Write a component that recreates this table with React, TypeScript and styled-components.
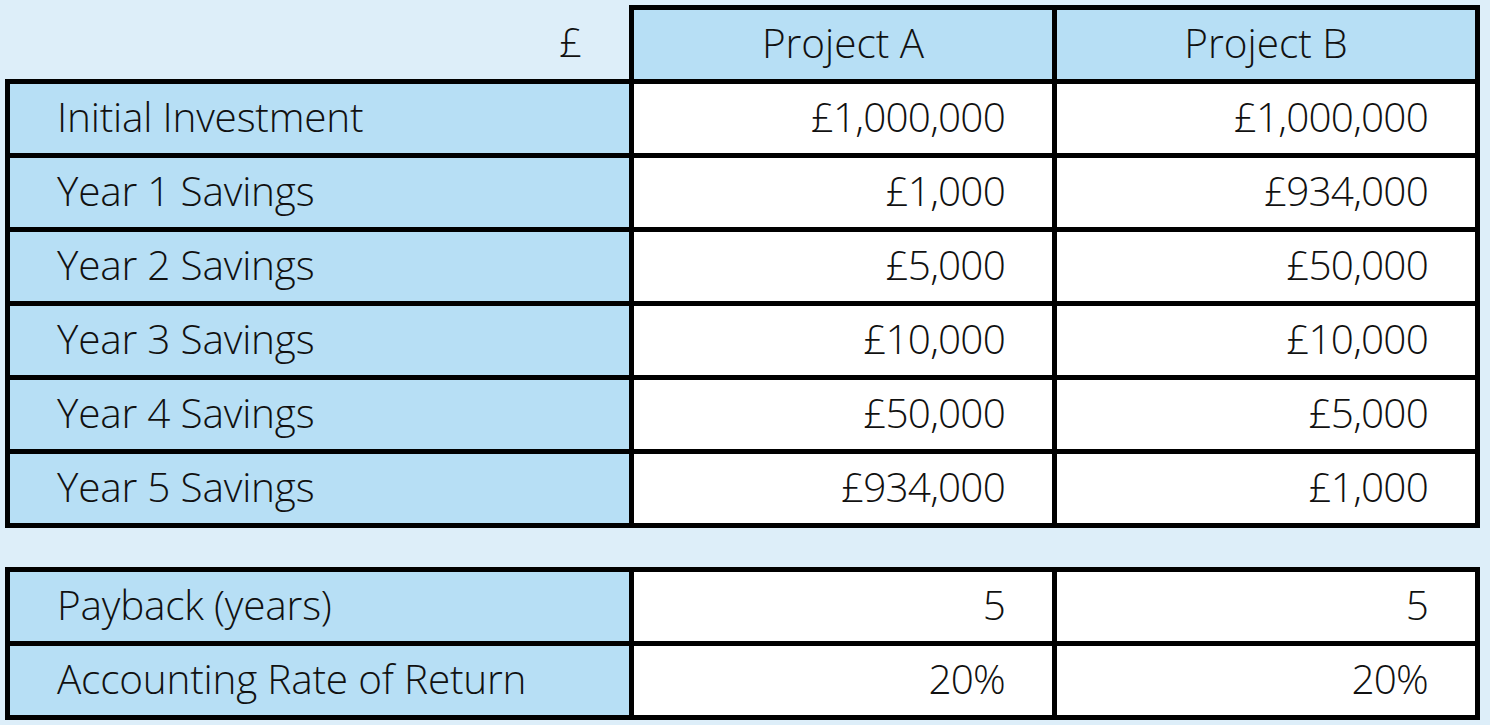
import React from "react";
import styled, { createGlobalStyle } from "styled-components";

const Global = createGlobalStyle`
  html, body { margin: 0; padding: 0; background: #ddeef9; }
  body { font-family: "Open Sans", "Liberation Sans", sans-serif; }
`;

const Page = styled.div`
  width: 1490px;
  height: 725px;
  background: #ddeef9;
  padding: 5px 0 0 5px;
  box-sizing: border-box;
  display: flex;
  flex-direction: column;
  gap: 39px;
`;

const Table = styled.table`
  border-collapse: collapse;
  table-layout: fixed;
  width: 1470px;
  color: #111;
  font-weight: 300;
  font-size: 40.5px;
`;

type Kind = "label" | "value" | "head" | "corner";

const Cell = styled.td<{ $kind: Kind }>`
  box-sizing: border-box;
  height: 74px;
  padding: 0 47px 2px 47px;
  font-weight: 300;
  border: ${(p) => (p.$kind === "corner" ? "none" : "5px solid #000")};
  background: ${(p) =>
    p.$kind === "value" ? "#ffffff" : p.$kind === "corner" ? "transparent" : "#b7dff5"};
  text-align: ${(p) =>
    p.$kind === "label" ? "left" : p.$kind === "head" ? "center" : "right"};
  letter-spacing: ${(p) => (p.$kind === "value" ? "-0.8px" : p.$kind === "label" ? "-0.2px" : "0")};
  white-space: nowrap;
  line-height: 1;
`;

const rows: [string, string, string][] = [
  ["Initial Investment", "£1,000,000", "£1,000,000"],
  ["Year 1 Savings", "£1,000", "£934,000"],
  ["Year 2 Savings", "£5,000", "£50,000"],
  ["Year 3 Savings", "£10,000", "£10,000"],
  ["Year 4 Savings", "£50,000", "£5,000"],
  ["Year 5 Savings", "£934,000", "£1,000"],
];

const results: [string, string, string][] = [
  ["Payback (years)", "5", "5"],
  ["Accounting Rate of Return", "20%", "20%"],
];

const Cols = () => (
  <colgroup>
    <col style={{ width: 624 }} />
    <col style={{ width: 423 }} />
    <col style={{ width: 423 }} />
  </colgroup>
);

const Body = ({ data }: { data: [string, string, string][] }) => (
  <tbody>
    {data.map(([l, a, b]) => (
      <tr key={l}>
        <Cell $kind="label">{l}</Cell>
        <Cell $kind="value">{a}</Cell>
        <Cell $kind="value">{b}</Cell>
      </tr>
    ))}
  </tbody>
);

export default function App() {
  return (
    <>
      <Global />
      <Page>
        <Table>
          <Cols />
          <thead>
            <tr>
              <Cell as="th" $kind="corner" style={{ textAlign: "right" }}>£</Cell>
              <Cell as="th" $kind="head">Project A</Cell>
              <Cell as="th" $kind="head">Project B</Cell>
            </tr>
          </thead>
          <Body data={rows} />
        </Table>
        <Table>
          <Cols />
          <Body data={results} />
        </Table>
      </Page>
    </>
  );
}
